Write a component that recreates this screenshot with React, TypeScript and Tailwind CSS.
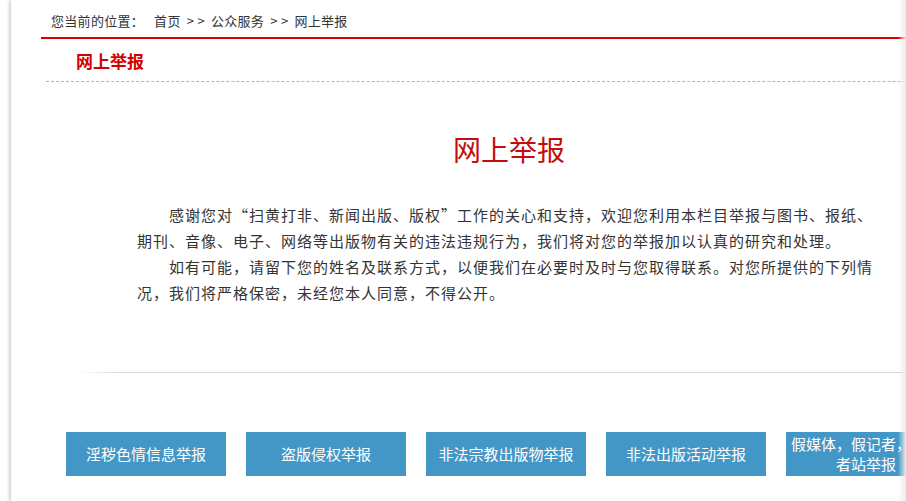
import React from 'react';

const reportButtons = [
    '淫秽色情信息举报',
    '盗版侵权举报',
    '非法宗教出版物举报',
    '非法出版活动举报',
    '假媒体，假记者，假记者站举报',
];

export default function App() {
    return (
        <div
            className="relative w-[906px] h-[501px] overflow-hidden bg-white text-[#333]"
            style={{ fontFamily: '"Noto Sans CJK SC", "Noto Sans", sans-serif' }}
        >
            <div className="ml-[11px] h-full w-[1100px] shadow-[-2px_0_3px_rgba(0,0,0,0.18)] bg-white">
                <div className="pl-[30px]">
                    {/* Breadcrumb */}
                    <div className="h-[37px] pl-[10px] pt-[12px] text-[13px] leading-[18px] text-[#333] tracking-[0.3px]">
                        <span>您当前的位置：</span>
                        <span className="ml-[10px]">首页</span>
                        <span className="mx-[6px]">&gt; &gt;</span>
                        <span>公众服务</span>
                        <span className="mx-[6px]">&gt; &gt;</span>
                        <span>网上举报</span>
                    </div>
                    <div className="h-[2px] bg-[#d90000]" />

                    {/* Section heading */}
                    <div className="ml-[5px] h-[43px] border-b border-dashed border-[#b5b5b5] pl-[30px] pt-[1px]">
                        <h3 className="text-[17px] leading-[42px] font-bold text-[#d40000]">网上举报</h3>
                    </div>

                    {/* Article */}
                    <div className="ml-[96px] w-[748px]">
                        <h1 className="mt-[47px] pr-[4px] text-center text-[28px] leading-[40px] text-[#c30d0d]">网上举报</h1>
                        <div className="mt-[33px] text-[15px] leading-[26px] tracking-[1px] text-[#333]">
                            <p className="indent-[32px]">
                                感谢您对“扫黄打非、新闻出版、版权”工作的关心和支持，欢迎您利用本栏目举报与图书、报纸、期刊、音像、电子、网络等出版物有关的违法违规行为，我们将对您的举报加以认真的研究和处理。
                            </p>
                            <p className="indent-[32px]">
                                如有可能，请留下您的姓名及联系方式，以便我们在必要时及时与您取得联系。对您所提供的下列情况，我们将严格保密，未经您本人同意，不得公开。
                            </p>
                        </div>
                    </div>

                    <div className="mt-[66px] ml-[34px] h-px bg-[linear-gradient(to_right,#ffffff,#d6d6d6_50px)]" />

                    {/* Report buttons */}
                    <div className="mt-[59px] ml-[25px] flex gap-[20px]">
                        {reportButtons.map(label => (
                            <a
                                key={label}
                                href="#"
                                className="flex h-[44px] w-[160px] shrink-0 items-center justify-center bg-[#4297c6] px-[5px] text-center text-[15px] leading-[20px] text-white"
                            >
                                {label}
                            </a>
                        ))}
                    </div>
                </div>
            </div>

            <div className="pointer-events-none absolute right-0 top-0 h-full w-[8px] bg-gradient-to-r from-transparent to-[#ececec]" />
        </div>
    );
}
